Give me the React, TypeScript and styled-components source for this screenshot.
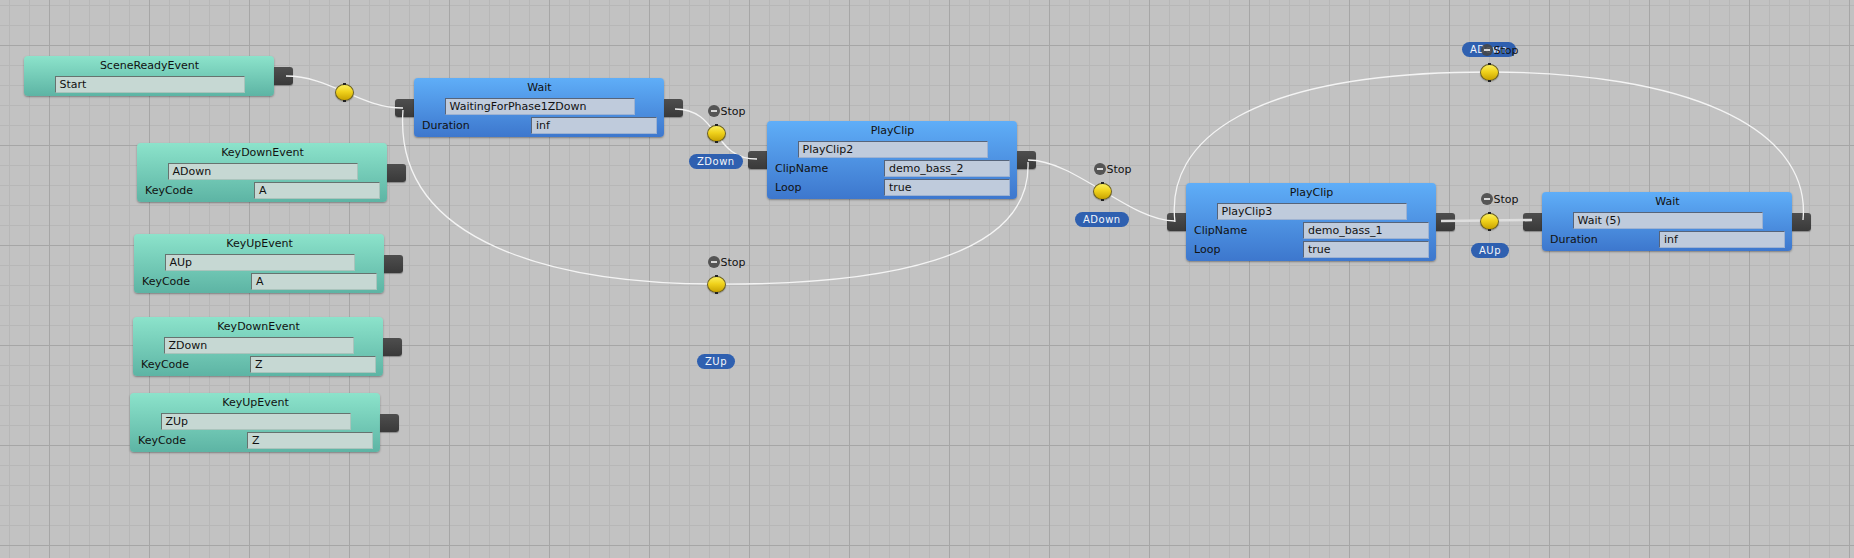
import React from 'react';
import styled, { createGlobalStyle, css } from 'styled-components';

const GlobalStyle = createGlobalStyle`
  html, body {
    margin: 0;
    padding: 0;
    background: #c2c2c2;
  }
  body {
    font-family: "DejaVu Sans", Verdana, sans-serif;
    overflow: hidden;
  }
`;

type Kind = 'event' | 'action';

const Canvas = styled.div`
  position: relative;
  width: 1854px;
  height: 558px;
  overflow: hidden;
  background-color: #c2c2c2;
  background-image:
    linear-gradient(to right, #a6a6a6 1px, transparent 1px),
    linear-gradient(to bottom, #a6a6a6 1px, transparent 1px),
    linear-gradient(to right, #b7b7b7 1px, transparent 1px),
    linear-gradient(to bottom, #b7b7b7 1px, transparent 1px);
  background-size: 100px 100px, 100px 100px, 20px 20px, 20px 20px;
  background-position: 49px 0, 0 45px, 9px 0, 0 5px;
`;

const NodeWrap = styled.div.attrs<{ $x: number; $y: number }>((p) => ({
  style: { left: p.$x, top: p.$y },
}))<{ $x: number; $y: number }>`
  position: absolute;
  display: flex;
  align-items: center;
`;

const NodeBody = styled.div<{ $kind: Kind }>`
  width: 250px;
  box-sizing: border-box;
  padding: 0 7px 3px 8px;
  border-radius: 4px;
  box-shadow: 0 1px 2px rgba(0, 0, 0, 0.35);
  background: ${({ $kind }) =>
    $kind === 'event'
      ? 'linear-gradient(to bottom, #8ce3cb, #5db4a4)'
      : 'linear-gradient(to bottom, #5faef8, #3d77cd)'};
`;

const Title = styled.div`
  height: 20px;
  line-height: 20px;
  text-align: center;
  font-size: 11px;
  color: #111;
`;

const fieldLook = css<{ $kind: Kind }>`
  box-sizing: border-box;
  height: 17px;
  padding: 0 4px;
  font-size: 11px;
  line-height: 15px;
  color: #111;
  white-space: nowrap;
  overflow: hidden;
  border: 1px solid;
  ${({ $kind }) =>
    $kind === 'event'
      ? css`
          background: #c6d8d3;
          border-color: #66736f #a9c4bc #a9c4bc #66736f;
        `
      : css`
          background: #bfcbdc;
          border-color: #56647a #9db2d2 #9db2d2 #56647a;
        `}
`;

const NameField = styled.div<{ $kind: Kind }>`
  ${fieldLook};
  width: 190px;
  margin: 0 auto;
`;

const Row = styled.div`
  display: grid;
  grid-template-columns: 109px 126px;
  align-items: center;
  margin-top: 2px;
`;

const Label = styled.div`
  font-size: 11px;
  color: #111;
`;

const ValueField = styled.div<{ $kind: Kind }>`
  ${fieldLook};
`;

const Port = styled.div<{ $side: 'in' | 'out' }>`
  width: 19px;
  height: 18px;
  background: linear-gradient(to bottom, #4e4e4e, #393939);
  box-shadow: 0 1px 1px rgba(0, 0, 0, 0.3);
  border-radius: ${({ $side }) => ($side === 'in' ? '3px 0 0 3px' : '0 3px 3px 0')};
`;

const Wires = styled.svg`
  position: absolute;
  left: 0;
  top: 0;
  pointer-events: none;
`;

const Marker = styled.div.attrs<{ $x: number; $y: number }>((p) => ({
  style: { left: p.$x - 9.5, top: p.$y - 8.5 },
}))<{ $x: number; $y: number }>`
  position: absolute;
`;

const Dot = styled.div`
  position: relative;
  width: 19px;
  height: 17px;
  box-sizing: border-box;
  border-radius: 50%;
  border: 1px solid #6a5f22;
  background: linear-gradient(to bottom, #fbef5c 0%, #f0d21c 45%, #c9a300 100%);
  box-shadow: 0 1px 1px rgba(0, 0, 0, 0.25);
  &::before,
  &::after {
    content: '';
    position: absolute;
    left: 7px;
    width: 3px;
    height: 2px;
    background: #222;
  }
  &::before {
    top: -2px;
  }
  &::after {
    bottom: -2px;
  }
`;

const StopLabel = styled.div`
  position: absolute;
  left: 1px;
  top: -20px;
  display: flex;
  align-items: center;
  gap: 1px;
  font-size: 11px;
  color: #111;
  white-space: nowrap;
`;

const StopIcon = styled.span`
  position: relative;
  width: 12px;
  height: 12px;
  border-radius: 50%;
  background: rgba(70, 70, 70, 0.88);
  &::after {
    content: '';
    position: absolute;
    left: 3px;
    top: 5px;
    width: 6px;
    height: 2px;
    background: #d8d8d8;
  }
`;

const Pill = styled.div.attrs<{ $x: number; $y: number }>((p) => ({
  style: { left: p.$x, top: p.$y },
}))<{ $x: number; $y: number }>`
  position: absolute;
  height: 15px;
  padding: 0 8px;
  border-radius: 8px;
  background: #2f60b0;
  color: #f4f6fa;
  font-size: 10px;
  line-height: 15px;
  letter-spacing: 0.5px;
  white-space: nowrap;
`;

type NodeData = {
  kind: Kind;
  title: string;
  name: string;
  x: number;
  y: number;
  rows: [string, string][];
  input?: boolean;
};

const nodes: NodeData[] = [
  { kind: 'event', title: 'SceneReadyEvent', name: 'Start', x: 24, y: 56, rows: [] },
  { kind: 'event', title: 'KeyDownEvent', name: 'ADown', x: 137, y: 143, rows: [['KeyCode', 'A']] },
  { kind: 'event', title: 'KeyUpEvent', name: 'AUp', x: 134, y: 234, rows: [['KeyCode', 'A']] },
  { kind: 'event', title: 'KeyDownEvent', name: 'ZDown', x: 133, y: 317, rows: [['KeyCode', 'Z']] },
  { kind: 'event', title: 'KeyUpEvent', name: 'ZUp', x: 130, y: 393, rows: [['KeyCode', 'Z']] },
  { kind: 'action', title: 'Wait', name: 'WaitingForPhase1ZDown', x: 414, y: 78, rows: [['Duration', 'inf']], input: true },
  {
    kind: 'action', title: 'PlayClip', name: 'PlayClip2', x: 767, y: 121, input: true,
    rows: [['ClipName', 'demo_bass_2'], ['Loop', 'true']],
  },
  {
    kind: 'action', title: 'PlayClip', name: 'PlayClip3', x: 1186, y: 183, input: true,
    rows: [['ClipName', 'demo_bass_1'], ['Loop', 'true']],
  },
  { kind: 'action', title: 'Wait', name: 'Wait (5)', x: 1542, y: 192, rows: [['Duration', 'inf']], input: true },
];

const wires = [
  { d: 'M286,76 C330,76 360,108 403,108' },
  { d: 'M675,109 C720,109 712,159 757,159' },
  { d: 'M1028,160 C1075,160 1130,221 1175,221' },
  { d: 'M403,110 C393,245 560,284 716,284 C880,285 1032,260 1028,162' },
  { d: 'M1175,222 C1165,140 1250,72 1489,72 C1680,72 1812,125 1803,220' },
];

const markers = [
  { x: 344, y: 92, stop: false },
  { x: 716, y: 133, stop: true },
  { x: 1102, y: 191, stop: true },
  { x: 716, y: 284, stop: true },
  { x: 1489, y: 221, stop: true },
  { x: 1489, y: 72, stop: true },
];

const pills = [
  { text: 'ZDown', x: 689, y: 154 },
  { text: 'ADown', x: 1075, y: 212 },
  { text: 'AUp', x: 1471, y: 243 },
  { text: 'ADown', x: 1462, y: 42 },
  { text: 'ZUp', x: 697, y: 354 },
];

const GraphNode: React.FC<{ node: NodeData }> = ({ node }) => (
  <NodeWrap $x={node.input ? node.x - 19 : node.x} $y={node.y}>
    {node.input && <Port $side="in" />}
    <NodeBody $kind={node.kind}>
      <Title>{node.title}</Title>
      <NameField $kind={node.kind}>{node.name}</NameField>
      {node.rows.map(([label, value]) => (
        <Row key={label}>
          <Label>{label}</Label>
          <ValueField $kind={node.kind}>{value}</ValueField>
        </Row>
      ))}
    </NodeBody>
    <Port $side="out" />
  </NodeWrap>
);

const App: React.FC = () => {
  return (
    <>
      <GlobalStyle />
      <Canvas>
        {nodes.map((n) => (
          <GraphNode key={n.name} node={n} />
        ))}
        <Wires width={1854} height={558}>
          {wires.map((w, i) => (
            <path key={i} d={w.d} fill="none" stroke="#f4f4f4" strokeWidth={1.3} />
          ))}
          <path d="M1441,221 L1532,220" fill="none" stroke="#dedede" strokeWidth={2.6} />
        </Wires>
        {pills.map((p, i) => (
          <Pill key={i} $x={p.x} $y={p.y}>{p.text}</Pill>
        ))}
        {markers.map((m, i) => (
          <Marker key={i} $x={m.x} $y={m.y}>
            <Dot />
            {m.stop && (
              <StopLabel>
                <StopIcon />
                Stop
              </StopLabel>
            )}
          </Marker>
        ))}
      </Canvas>
    </>
  );
};

export default App;
